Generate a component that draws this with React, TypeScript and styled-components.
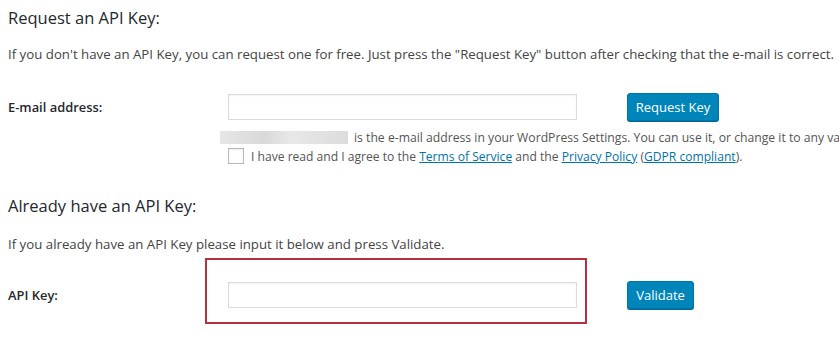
import React from "react";
import styled, { createGlobalStyle } from "styled-components";

const Global = createGlobalStyle`
  html, body { margin: 0; padding: 0; background: #ffffff; }
  body {
    font-family: "Open Sans", "Noto Sans", Arial, sans-serif;
    color: #23282d;
    overflow: hidden;
    width: 839px;
    height: 340px;
  }
`;

const Page = styled.div`
  padding-left: 8px;
  white-space: nowrap;
`;

const Heading = styled.h2<{ $top: number }>`
  margin: ${(p) => p.$top}px 0 0 0;
  font-size: 16.5px;
  line-height: 24px;
  font-weight: 500;
  color: #23282d;
`;

const Text = styled.p<{ $top: number }>`
  margin: ${(p) => p.$top}px 0 0 0;
  font-size: 13.25px;
  line-height: 20px;
  color: #444;
`;

const FormRow = styled.div<{ $top: number }>`
  margin-top: ${(p) => p.$top}px;
  display: grid;
  grid-template-columns: 220px 349px auto;
  align-items: center;
  height: 28px;
`;

const Label = styled.label`
  font-size: 12.9px;
  font-weight: 600;
  color: #23282d;
`;

const Field = styled.div`
  position: relative;
  height: 26px;
`;

const Input = styled.input`
  box-sizing: border-box;
  width: 349px;
  height: 26px;
  margin: 0;
  border: 1px solid #dcdcdc;
  box-shadow: inset 0 1px 2px rgba(0, 0, 0, 0.06);
  background: #fff;
  outline: none;
  font-family: inherit;
`;

const Highlight = styled.div`
  position: absolute;
  left: -23px;
  top: -24px;
  width: 382px;
  height: 66px;
  box-sizing: border-box;
  border: 2px solid #b63140;
  pointer-events: none;
`;

const Button = styled.button<{ $width: number }>`
  margin-left: 50px;
  box-sizing: border-box;
  width: ${(p) => p.$width}px;
  height: 28px;
  padding: 0;
  border: 1px solid #0073aa;
  border-radius: 3px;
  background: #0085ba;
  box-shadow: 0 1px 0 #006799;
  color: #fff;
  font-family: "Open Sans", "Noto Sans", Arial, sans-serif;
  font-size: 13px;
  line-height: 26px;
  text-align: center;
  cursor: pointer;
`;

const Note = styled.div`
  margin: 7px 0 0 212px;
  display: flex;
  align-items: center;
  height: 18px;
  font-size: 12.2px;
  color: #555;
`;

const Blurred = styled.span`
  flex: none;
  display: inline-block;
  width: 128px;
  height: 13px;
  margin-right: 6px;
  background: linear-gradient(90deg, #e6e6e6 0%, #d9d9d9 35%, #e8e8e8 55%, #dcdcdc 100%);
  filter: blur(0.6px);
`;

const Agree = styled.div`
  margin: 2px 0 0 220px;
  display: flex;
  align-items: center;
  height: 16px;
  font-size: 12.1px;
  color: #555;
`;

const Box = styled.span`
  box-sizing: border-box;
  width: 16px;
  height: 16px;
  border: 1px solid #b4b9be;
  background: #fff;
  box-shadow: inset 0 1px 2px rgba(0, 0, 0, 0.08);
  margin-right: 7px;
  flex: none;
`;

const Link = styled.a`
  color: #0073aa;
  text-decoration: underline;
`;

export default function App() {
  return (
    <>
      <Global />
      <Page>
        <Heading $top={6}>Request an API Key:</Heading>
        <Text $top={14}>
          If you don't have an API Key, you can request one for free. Just press the "Request Key" button
          after checking that the e-mail is correct.
        </Text>
        <FormRow $top={29}>
          <Label>E-mail address:</Label>
          <Field>
            <Input type="text" />
          </Field>
          <Button $width={92}>Request Key</Button>
        </FormRow>
        <Note>
          <Blurred />
          is the e-mail address in your WordPress Settings. You can use it, or change it to any valid e-mail.
        </Note>
        <Agree>
          <Box />
          <span>
            I have read and I agree to the <Link>Terms of Service</Link> and the <Link>Privacy Policy</Link> (
            <Link>GDPR compliant</Link>).
          </span>
        </Agree>
        <Heading $top={30}>Already have an API Key:</Heading>
        <Text $top={16}>If you already have an API Key please input it below and press Validate.</Text>
        <FormRow $top={27}>
          <Label>API Key:</Label>
          <Field>
            <Input type="text" />
            <Highlight />
          </Field>
          <Button $width={67}>Validate</Button>
        </FormRow>
      </Page>
    </>
  );
}
